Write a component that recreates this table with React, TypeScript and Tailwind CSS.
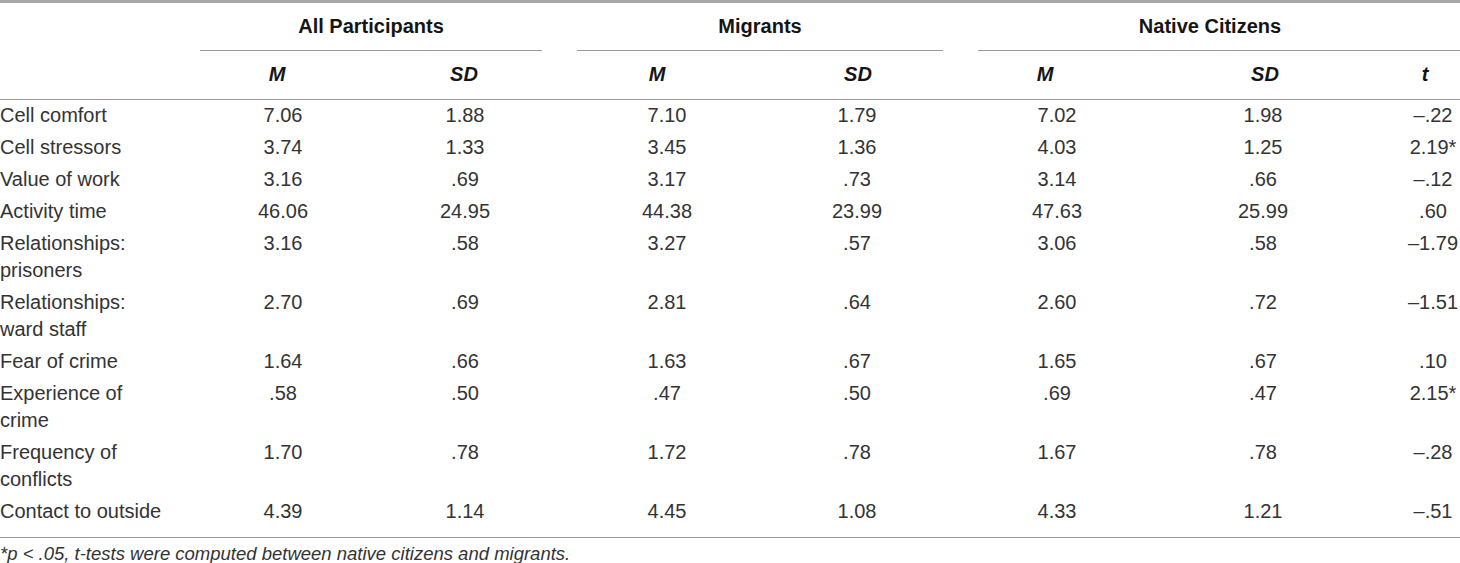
import React from "react";

const rows: [string, string[]][] = [
  ["Cell comfort", ["7.06", "1.88", "7.10", "1.79", "7.02", "1.98", "–.22"]],
  ["Cell stressors", ["3.74", "1.33", "3.45", "1.36", "4.03", "1.25", "2.19*"]],
  ["Value of work", ["3.16", ".69", "3.17", ".73", "3.14", ".66", "–.12"]],
  ["Activity time", ["46.06", "24.95", "44.38", "23.99", "47.63", "25.99", ".60"]],
  ["Relationships: prisoners", ["3.16", ".58", "3.27", ".57", "3.06", ".58", "–1.79"]],
  ["Relationships: ward staff", ["2.70", ".69", "2.81", ".64", "2.60", ".72", "–1.51"]],
  ["Fear of crime", ["1.64", ".66", "1.63", ".67", "1.65", ".67", ".10"]],
  ["Experience of crime", [".58", ".50", ".47", ".50", ".69", ".47", "2.15*"]],
  ["Frequency of conflicts", ["1.70", ".78", "1.72", ".78", "1.67", ".78", "–.28"]],
  ["Contact to outside", ["4.39", "1.14", "4.45", "1.08", "4.33", "1.21", "–.51"]],
];

const grid =
  "grid grid-cols-[200px_166px_194px_214px_186px_194px_232px_74px]";

const valueCls = [
  "text-center",
  "text-center pl-[4px]",
  "text-center",
  "text-center pr-[20px]",
  "text-center",
  "text-center pr-[14px]",
  "text-center pl-[20px]",
];

export default function App() {
  return (
    <div
      className="w-[1460px] h-[563px] overflow-hidden bg-white text-[#333333]"
      style={{ fontFamily: '"Liberation Sans", Arial, sans-serif' }}
    >
      <div className="border-t-[3px] border-[#a8a8a8]">
        {/* Header row 1 */}
        <div className={`${grid} text-[20px] leading-[27px] font-bold text-[#151515]`}>
          <div />
          <div className="col-span-2 mr-[18px] border-b border-[#9a9a9a] pt-[10px] pb-[10px] text-center">
            All Participants
          </div>
          <div className="col-span-2 mx-[17px] border-b border-[#9a9a9a] pt-[10px] pb-[10px] text-center">
            Migrants
          </div>
          <div className="col-span-3 ml-[18px] border-b border-[#9a9a9a] pt-[10px] pb-[10px] pr-[18px] text-center">
            Native Citizens
          </div>
        </div>
        {/* Header row 2 */}
        <div
          className={`${grid} border-b border-[#9a9a9a] text-[20px] leading-[27px] font-bold italic text-[#151515] pt-[10px] pb-[11px]`}
        >
          <div />
          <div className="text-center pr-[12px]">M</div>
          <div className="text-center pl-[2px]">SD</div>
          <div className="text-center pr-[20px]">M</div>
          <div className="text-center pr-[18px]">SD</div>
          <div className="text-center pr-[24px]">M</div>
          <div className="text-center pr-[10px]">SD</div>
          <div className="text-center pl-[4px]">t</div>
        </div>
        {/* Body */}
        <div className="border-b border-[#9a9a9a] pb-[9px]">
          {rows.map(([label, vals]) => (
            <div
              key={label}
              className={`${grid} text-[20px] leading-[27px] pt-[2px] pb-[3px] items-start`}
            >
              <div className="pr-[30px]">{label}</div>
              {vals.map((v, i) => (
                <div key={i} className={valueCls[i]}>
                  {v}
                </div>
              ))}
            </div>
          ))}
        </div>
        <div className="pt-[5px] text-[18.5px] leading-[22px] italic text-[#333333]">
          *p &lt; .05, t-tests were computed between native citizens and migrants.
        </div>
      </div>
    </div>
  );
}
